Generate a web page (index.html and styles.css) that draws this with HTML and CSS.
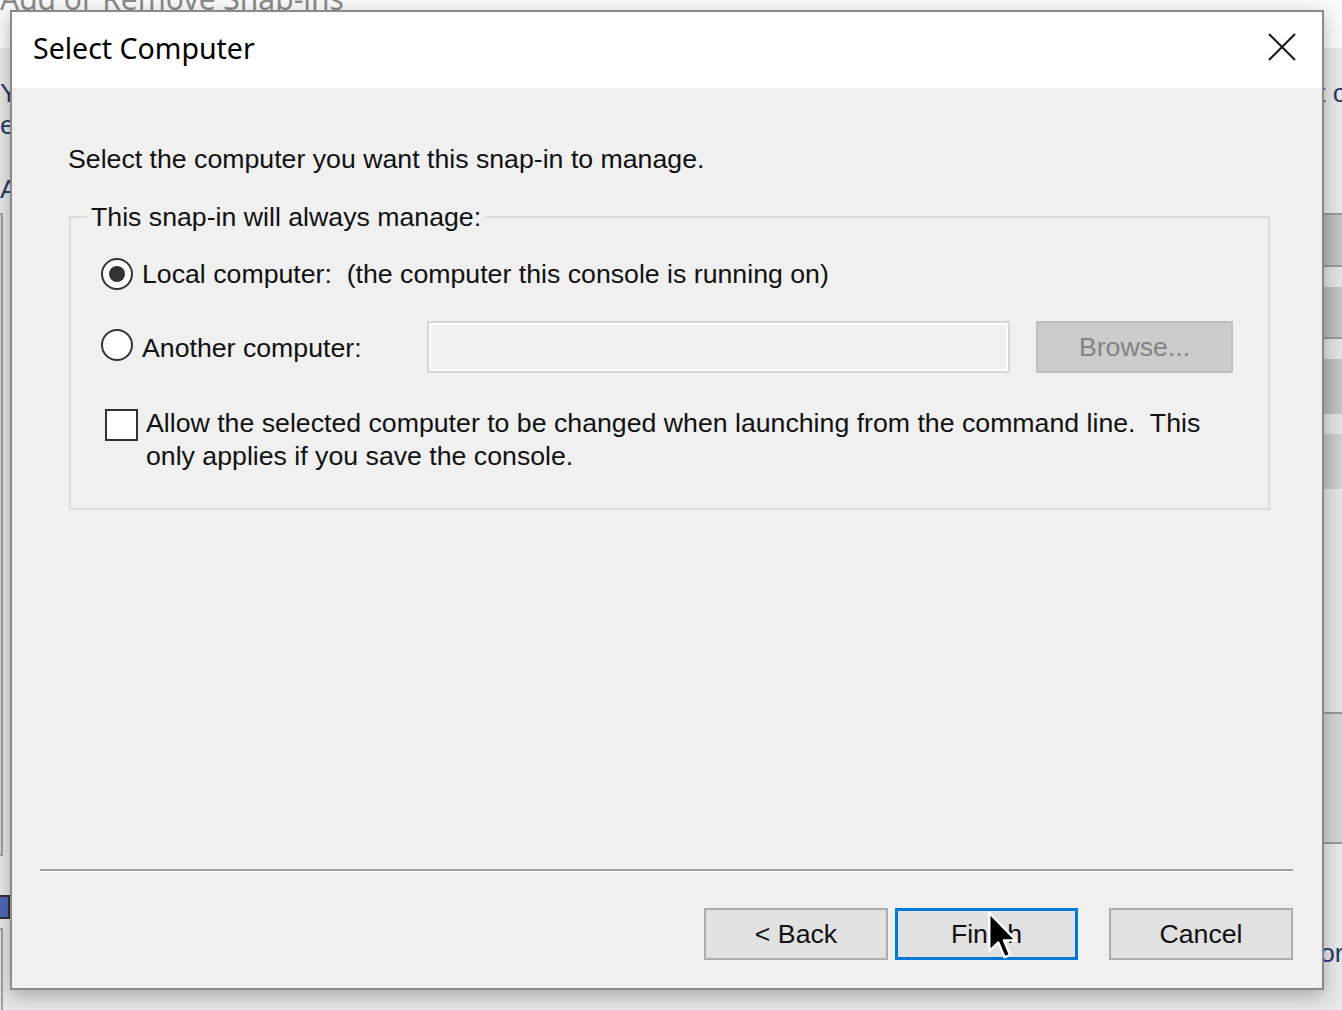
FILE: index.html
```html
<!DOCTYPE html>
<html lang="en">
<head>
<meta charset="utf-8">
<title>Select Computer</title>
<link rel="stylesheet" href="styles.css">
</head>
<body>
<div class="desktop">
  <div class="bgwin">
    <div class="bg-title">Add or Remove Snap-ins</div>
    <div class="bg-left-text bl-y">Y</div>
    <div class="bg-left-text bl-e">e</div>
    <div class="bg-left-text bl-a">A</div>
    <div class="bg-listbox"></div>
    <div class="bg-left-check"></div>
    <div class="bg-left-box2"></div>
    <div class="bg-right-text">t c</div>
    <div class="bg-right-col">
      <div class="band b1"></div>
      <div class="band b2"></div>
      <div class="band b3"></div>
      <div class="band b2"></div>
      <div class="band b3"></div>
      <div class="band b4"></div>
      <div class="band b3"></div>
      <div class="band b5"></div>
      <div class="band b3 b6"></div>
      <div class="band b7"></div>
    </div>
    <div class="bg-right-or">or</div>
  </div>

  <div class="dialog">
    <div class="titlebar">
      <span class="title">Select Computer</span>
      <span class="close">
        <svg width="30" height="30" viewBox="0 0 30 30"><path d="M2 2 L28 28 M28 2 L2 28" stroke="#1a1a1a" stroke-width="2.2" fill="none"/></svg>
      </span>
    </div>
    <div class="body">
      <p class="intro">Select the computer you want this snap-in to manage.</p>
      <fieldset class="group">
        <legend>This snap-in will always manage:</legend>
        <div class="row row-local">
          <span class="radio checked"></span>
          <span class="lbl">Local computer:&nbsp; (the computer this console is running on)</span>
        </div>
        <div class="row row-another">
          <span class="radio"></span>
          <span class="lbl lbl-another">Another computer:</span>
          <span class="textbox"></span>
          <span class="browse">Browse...</span>
        </div>
        <div class="row row-check">
          <span class="check"></span>
          <span class="lbl">Allow the selected computer to be changed when launching from the command line.&nbsp; This<br>only applies if you save the console.</span>
        </div>
      </fieldset>
      <div class="footer">
        <div class="sep"></div>
        <div class="buttons">
          <span class="btn">&lt; Back</span>
          <span class="btn btn-default">Finish
            <svg class="cursor" width="30" height="52" viewBox="0 0 13 22"><path d="M1 1 V17.5 L4.9 13.8 L7.6 20.2 L10 19.2 L7.3 12.9 H12.6 Z" fill="#000" stroke="#fff" stroke-width="1" stroke-linejoin="round"/></svg>
          </span>
          <span class="btn btn-cancel">Cancel</span>
        </div>
      </div>
    </div>
  </div>
</div>
</body>
</html>
```

FILE: styles.css
```css
* { box-sizing: border-box; }
html, body { margin: 0; padding: 0; }
body {
  width: 1342px;
  height: 1010px;
  overflow: hidden;
  font-family: "Liberation Sans", Arial, sans-serif;
  font-size: 26.7px;
  color: #111;
}
.desktop {
  position: relative;
  width: 1342px;
  height: 1010px;
  background: #e6e6e6;
  overflow: hidden;
}

/* background window (partially hidden) */
.bgwin {
  position: absolute;
  inset: 0;
  background: linear-gradient(#fafafa 0, #fafafa 48px, #e8e8e8 48px, #e8e8e8 100%);
}
.bg-title {
  position: absolute;
  left: 0;
  top: -22px;
  font-family: "Noto Sans", sans-serif;
  font-size: 30px;
  color: #8a8a8a;
}
.bg-left-text {
  position: absolute;
  left: 0;
  font-size: 26.7px;
  color: #2a3a6a;
}
.bl-y { top: 78px; }
.bl-e { top: 110px; }
.bl-a { top: 174px; }
.bg-listbox {
  position: absolute;
  left: -60px;
  top: 213px;
  width: 63px;
  height: 643px;
  border: 2px solid #a0a0a0;
  background: #dcdcdc;
}
.bg-left-check {
  position: absolute;
  left: -20px;
  top: 895px;
  width: 30px;
  height: 24px;
  border: 2px solid #333;
  background: #5068b8;
}
.bg-left-box2 {
  position: absolute;
  left: -60px;
  top: 928px;
  width: 63px;
  height: 120px;
  border: 2px solid #a0a0a0;
  background: #e8e8e8;
}
.bg-right-text {
  position: absolute;
  left: 1318px;
  top: 78px;
  font-size: 26.7px;
  color: #2a3a6a;
  white-space: nowrap;
}
.bg-right-col {
  position: absolute;
  left: 1324px;
  top: 213px;
  width: 30px;
  display: flex;
  flex-direction: column;
}
.band { width: 100%; }
.b1 { height: 2px; background: #9a9a9a; }
.b2 { height: 52px; background: linear-gradient(90deg, #b8b8b8, #cfcfcf); border-bottom: 2px solid #999; }
.b3 { height: 20px; background: #e2e2e2; }
.b4 { height: 55px; background: linear-gradient(90deg, #b8b8b8, #cfcfcf); }
.b5 { height: 55px; background: linear-gradient(90deg, #c4c4c4, #d6d6d6); }
.b6 { height: 225px; background: #e4e4e4; border-bottom: 2px solid #999; }
.b7 { height: 130px; background: #d4d4d4; border-bottom: 2px solid #999; }
.bg-right-or {
  position: absolute;
  left: 1320px;
  top: 938px;
  color: #2a3a6a;
  font-size: 26.7px;
}

/* dialog window */
.dialog {
  position: absolute;
  left: 10px;
  top: 10px;
  width: 1314px;
  height: 980px;
  border: 2px solid #8a8a8a;
  background: #f0f0f0;
  box-shadow: 0 6px 18px rgba(0, 0, 0, 0.28);
  display: flex;
  flex-direction: column;
}
.titlebar {
  height: 76px;
  flex: none;
  background: #fff;
  display: flex;
  align-items: center;
  padding-left: 21px;
  padding-right: 24px;
}
.title {
  font-family: "Noto Sans", "Open Sans", sans-serif;
  font-size: 28.5px;
  color: #000;
  flex: 1;
  padding-bottom: 4px;
}
.close {
  display: flex;
  width: 30px;
  height: 30px;
  margin-right: 1px;
  margin-bottom: 6px;
}

.body {
  flex: 1;
  display: flex;
  flex-direction: column;
  padding-left: 56px;
  padding-right: 52px;
}
.intro {
  margin: 54px 0 0 0;
  line-height: 34px;
  white-space: nowrap;
}
.group {
  margin: 24px 0 0 1px;
  padding: 0 0 35px 0;
  border: 2px solid #dcdcdc;
  min-width: 0;
}
.group legend {
  margin-left: 16px;
  padding: 0 4px;
  line-height: 34px;
}
.row {
  display: flex;
  align-items: center;
  padding-left: 30px;
  white-space: nowrap;
}
.row-local { margin-top: 14px; height: 52px; }
.row-another { margin-top: 21px; height: 52px; }
.row-check { margin-top: 34px; align-items: flex-start; padding-left: 34px; }
.lbl { line-height: 33px; }
.radio {
  flex: none;
  width: 32px;
  height: 32px;
  border-radius: 50%;
  border: 2px solid #333;
  background: #fff;
  margin-right: 9px;
  display: flex;
  align-items: center;
  justify-content: center;
}
.row-another .radio { margin-top: -4px; }
.radio.checked::after {
  content: "";
  width: 16px;
  height: 16px;
  border-radius: 50%;
  background: #333;
}
.lbl-another {
  width: 285px;
  flex: none;
  padding-top: 2px;
}
.textbox {
  flex: none;
  width: 583px;
  height: 52px;
  border: 2px solid #d6d6d6;
  box-shadow: inset 0 0 0 2px #fbfbfb;
  background: #f0f0f0;
}
.browse {
  flex: none;
  margin-left: 26px;
  width: 197px;
  height: 52px;
  background: #cccccc;
  border: 2px solid #bfbfbf;
  color: #838383;
  display: flex;
  align-items: center;
  justify-content: center;
}
.check {
  flex: none;
  width: 33px;
  height: 32px;
  margin-top: 2px;
  margin-right: 8px;
  border: 2px solid #333;
  background: #fff;
}

.footer {
  margin-top: auto;
  margin-left: -28px;
  margin-right: -23px;
  padding-bottom: 28px;
}
.sep {
  border-top: 2px solid #a0a0a0;
  border-bottom: 1px solid #fff;
}
.buttons {
  margin-top: 36px;
  display: flex;
  justify-content: flex-end;
}
.btn {
  position: relative;
  width: 184px;
  height: 52px;
  background: #e1e1e1;
  border: 2px solid #adadad;
  display: flex;
  align-items: center;
  justify-content: center;
  color: #111;
}
.btn-default {
  margin-left: 7px;
  width: 183px;
  border: 3px solid #0078d7;
}
.btn-cancel { margin-left: 31px; }
.cursor {
  position: absolute;
  left: 89px;
  top: -1px;
}
```
